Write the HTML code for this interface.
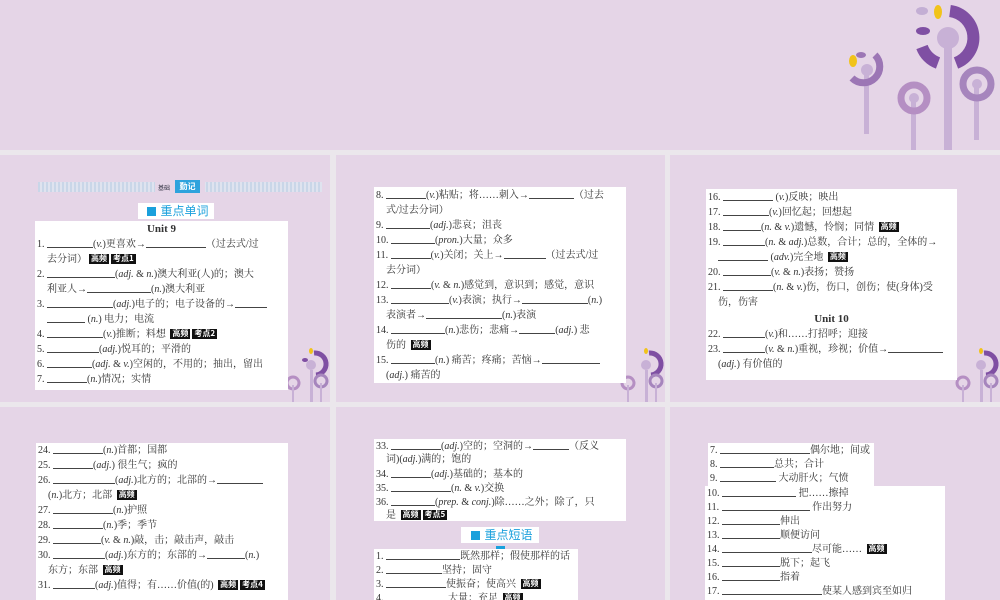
<!DOCTYPE html>
<html><head><meta charset="utf-8">
<style>
*{margin:0;padding:0;box-sizing:border-box}
body{width:1000px;height:600px;overflow:hidden;background:#ebe7ec;position:relative;font-family:"Liberation Serif","Noto Serif CJK SC",serif;color:#333}
.s{position:absolute;background:#e5d5e7}
.b{position:absolute;background:#fff;font-size:10px;line-height:15px;padding:0 2px;white-space:nowrap;overflow:hidden}
.b div{height:15px}
.b5 div{height:14px;line-height:14px}
.i{padding-left:10px}
u{display:inline-block;text-decoration:none;border-bottom:1px solid #444;height:11px;vertical-align:-1px}
em{font-style:italic}
.t{display:inline-block;background:#111;color:#fff;font-size:8px;line-height:10px;padding:0 2px;font-family:"Noto Sans CJK SC",sans-serif;font-weight:bold;vertical-align:1px;margin-left:2px}
.h{position:absolute;background:#fff;color:#1aa0dc;font-family:"Noto Sans CJK SC",sans-serif;font-size:12px;line-height:15px;text-align:center}
.h:before,.h:after{content:"";display:inline-block;width:9px;height:9px;background:#1aa0dc;margin:0 4px;vertical-align:-1px}
.c{text-align:center;font-weight:bold;font-size:11px}
</style></head><body>
<div class="s" style="left:0;top:0;width:1000px;height:150px"></div>
<svg style="position:absolute;left:840px;top:0" width="160" height="150">
<g fill="none">
<rect x="104" y="40" width="8" height="110" fill="#c8b1d6"/>
<circle cx="108" cy="38" r="11" fill="#c8b1d6"/>
<path d="M110 11 A27 27 0 0 1 116 63" stroke="#7f4fa3" stroke-width="12"/>
<path d="M98 63 A27 27 0 0 1 82 47" stroke="#7f4fa3" stroke-width="12"/>
<ellipse cx="83" cy="31" rx="7" ry="4" fill="#7f4fa3"/>
<ellipse cx="82" cy="11" rx="6" ry="4" fill="#c3aed4"/>
<ellipse cx="98" cy="12" rx="4" ry="7" fill="#f1c31a"/>
<rect x="24" y="72" width="5" height="62" fill="#c8b1d6"/>
<circle cx="27" cy="70" r="6" fill="#c8b1d6"/>
<path d="M35 55 A16 16 0 1 1 12 78" stroke="#9c76b5" stroke-width="7"/>
<ellipse cx="13" cy="61" rx="4" ry="6" fill="#f1c31a"/>
<ellipse cx="21" cy="55" rx="5" ry="3" fill="#9c76b5"/>
<rect x="71" y="100" width="5" height="50" fill="#c8b1d6"/>
<circle cx="74" cy="98" r="13" stroke="#b58fc3" stroke-width="7"/>
<circle cx="74" cy="98" r="5" fill="#c8b1d6"/>
<rect x="134" y="86" width="5" height="54" fill="#c8b1d6"/>
<circle cx="137" cy="84" r="14" stroke="#a685bd" stroke-width="7"/>
<circle cx="137" cy="84" r="5" fill="#c8b1d6"/>
</g></svg>

<div class="s" style="left:0;top:155px;width:330px;height:247px"></div>
<div class="s" style="left:336px;top:155px;width:329px;height:247px"></div>
<div class="s" style="left:670px;top:155px;width:330px;height:247px"></div>
<div class="s" style="left:0;top:407px;width:330px;height:193px"></div>
<div class="s" style="left:336px;top:407px;width:329px;height:193px"></div>
<div class="s" style="left:670px;top:407px;width:330px;height:193px"></div>

<svg style="position:absolute;left:283px;top:345px" width="47" height="57"><g fill="none"><rect x="27" y="25" width="3" height="32" fill="#c8b1d6"/><circle cx="28" cy="20" r="5" fill="#c8b1d6"/><path d="M31 8 A11 11 0 0 1 33 30" stroke="#7f4fa3" stroke-width="5"/><ellipse cx="22" cy="15" rx="3" ry="2" fill="#7f4fa3"/><ellipse cx="28" cy="6" rx="2" ry="3" fill="#f1c31a"/><circle cx="10" cy="38" r="6" stroke="#b58fc3" stroke-width="3"/><rect x="9" y="40" width="2" height="17" fill="#c8b1d6"/><circle cx="38" cy="36" r="6" stroke="#a685bd" stroke-width="3"/><rect x="37" y="38" width="2" height="19" fill="#c8b1d6"/></g></svg>
<svg style="position:absolute;left:618px;top:345px" width="47" height="57"><g fill="none"><rect x="27" y="25" width="3" height="32" fill="#c8b1d6"/><circle cx="28" cy="20" r="5" fill="#c8b1d6"/><path d="M31 8 A11 11 0 0 1 33 30" stroke="#7f4fa3" stroke-width="5"/><ellipse cx="28" cy="6" rx="2" ry="3" fill="#f1c31a"/><circle cx="10" cy="38" r="6" stroke="#b58fc3" stroke-width="3"/><rect x="9" y="40" width="2" height="17" fill="#c8b1d6"/><circle cx="38" cy="36" r="6" stroke="#a685bd" stroke-width="3"/><rect x="37" y="38" width="2" height="19" fill="#c8b1d6"/></g></svg>
<svg style="position:absolute;left:953px;top:345px" width="47" height="57"><g fill="none"><rect x="27" y="25" width="3" height="32" fill="#c8b1d6"/><circle cx="28" cy="20" r="5" fill="#c8b1d6"/><path d="M31 8 A11 11 0 0 1 33 30" stroke="#7f4fa3" stroke-width="5"/><ellipse cx="28" cy="6" rx="2" ry="3" fill="#f1c31a"/><circle cx="10" cy="38" r="6" stroke="#b58fc3" stroke-width="3"/><rect x="9" y="40" width="2" height="17" fill="#c8b1d6"/><circle cx="38" cy="36" r="6" stroke="#a685bd" stroke-width="3"/><rect x="37" y="38" width="2" height="19" fill="#c8b1d6"/></g></svg>

<div style="position:absolute;left:38px;top:182px;width:284px;height:10px;background:repeating-linear-gradient(90deg,#c9d6e8 0 2px,#dfe3ef 2px 4px)"></div>
<div style="position:absolute;left:155px;top:180px;width:50px;height:13px;background:#e5d5e7"></div>
<div style="position:absolute;left:158px;top:183px;font-size:6px;color:#334;font-family:'Noto Sans CJK SC',sans-serif">基础</div>
<div style="position:absolute;left:175px;top:180px;width:25px;height:13px;background:#2ea3dd;color:#fff;font-size:8px;line-height:13px;text-align:center;font-family:'Noto Sans CJK SC',sans-serif;font-weight:bold">勤记</div>
<div class="h" style="left:138px;top:203px;width:76px;height:16px">重点单词</div>
<div class="b" style="left:35px;top:221px;width:253px;height:169px;padding-top:1px">
<div class="c">Unit 9</div>
<div>1. <u style="width:46px"></u>(<em>v.</em>)更喜欢→<u style="width:60px"></u>（过去式/过</div>
<div class="i">去分词）<span class="t">高频</span><span class="t">考点1</span></div>
<div>2. <u style="width:68px"></u>(<em>adj.</em> &amp; <em>n.</em>)澳大利亚(人)的；澳大</div>
<div class="i">利亚人→<u style="width:64px"></u>(<em>n.</em>)澳大利亚</div>
<div>3. <u style="width:66px"></u>(<em>adj.</em>)电子的；电子设备的→<u style="width:32px"></u></div>
<div class="i"><u style="width:38px"></u> (<em>n.</em>) 电力；电流</div>
<div>4. <u style="width:56px"></u>(<em>v.</em>)推断；料想 <span class="t">高频</span><span class="t">考点2</span></div>
<div>5. <u style="width:52px"></u>(<em>adj.</em>)悦耳的；平滑的</div>
<div>6. <u style="width:45px"></u>(<em>adj.</em> &amp; <em>v.</em>)空闲的，不用的；抽出，留出</div>
<div>7. <u style="width:40px"></u>(<em>n.</em>)情况；实情</div>
</div>

<div class="b" style="left:374px;top:187px;width:252px;height:196px;padding-top:1px">
<div>8. <u style="width:40px"></u>(<em>v.</em>)粘贴；将……刺入→<u style="width:45px"></u>（过去</div>
<div class="i">式/过去分词）</div>
<div>9. <u style="width:44px"></u>(<em>adj.</em>)悲哀；沮丧</div>
<div>10. <u style="width:44px"></u>(<em>pron.</em>)大量；众多</div>
<div>11. <u style="width:40px"></u>(<em>v.</em>)关闭；关上→<u style="width:42px"></u>（过去式/过</div>
<div class="i">去分词）</div>
<div>12. <u style="width:40px"></u>(<em>v.</em> &amp; <em>n.</em>)感觉到，意识到；感觉，意识</div>
<div>13. <u style="width:58px"></u>(<em>v.</em>)表演；执行→<u style="width:66px"></u>(<em>n.</em>)</div>
<div class="i">表演者→<u style="width:76px"></u>(<em>n.</em>)表演</div>
<div>14. <u style="width:54px"></u>(<em>n.</em>)悲伤；悲痛→<u style="width:36px"></u>(<em>adj.</em>) 悲</div>
<div class="i">伤的 <span class="t">高频</span></div>
<div>15. <u style="width:44px"></u>(<em>n.</em>) 痛苦；疼痛；苦恼→<u style="width:58px"></u></div>
<div class="i">(<em>adj.</em>) 痛苦的</div>
</div>

<div class="b" style="left:706px;top:189px;width:251px;height:191px;padding-top:1px">
<div>16. <u style="width:50px"></u> (<em>v.</em>)反映；映出</div>
<div>17. <u style="width:46px"></u>(<em>v.</em>)回忆起；回想起</div>
<div>18. <u style="width:38px"></u>(<em>n.</em> &amp; <em>v.</em>)遗憾，怜悯；同情 <span class="t">高频</span></div>
<div>19. <u style="width:42px"></u>(<em>n.</em> &amp; <em>adj.</em>)总数，合计；总的，全体的→</div>
<div class="i"><u style="width:50px"></u> (<em>adv.</em>)完全地 <span class="t">高频</span></div>
<div>20. <u style="width:48px"></u>(<em>v.</em> &amp; <em>n.</em>)表扬；赞扬</div>
<div>21. <u style="width:50px"></u>(<em>n.</em> &amp; <em>v.</em>)伤，伤口，创伤；使(身体)受</div>
<div class="i">伤，伤害</div>
<div class="c" style="height:17px;line-height:19px">Unit 10</div>
<div>22. <u style="width:42px"></u>(<em>v.</em>)和……打招呼；迎接</div>
<div>23. <u style="width:42px"></u>(<em>v.</em> &amp; <em>n.</em>)重视，珍视；价值→<u style="width:55px"></u></div>
<div class="i">(<em>adj.</em>) 有价值的</div>
</div>

<div class="b" style="left:36px;top:443px;width:252px;height:157px;padding-top:0">
<div>24. <u style="width:50px"></u>(<em>n.</em>)首都；国都</div>
<div>25. <u style="width:40px"></u>(<em>adj.</em>) 很生气；疯的</div>
<div>26. <u style="width:62px"></u>(<em>adj.</em>)北方的；北部的→<u style="width:46px"></u></div>
<div class="i">(<em>n.</em>)北方；北部 <span class="t">高频</span></div>
<div>27. <u style="width:60px"></u>(<em>n.</em>)护照</div>
<div>28. <u style="width:50px"></u>(<em>n.</em>)季；季节</div>
<div>29. <u style="width:48px"></u>(<em>v.</em> &amp; <em>n.</em>)敲，击；敲击声，敲击</div>
<div>30. <u style="width:52px"></u>(<em>adj.</em>)东方的；东部的→<u style="width:38px"></u>(<em>n.</em>)</div>
<div class="i">东方；东部 <span class="t">高频</span></div>
<div>31. <u style="width:42px"></u>(<em>adj.</em>)值得；有……价值(的) <span class="t">高频</span><span class="t">考点4</span></div>
</div>

<div class="b b5" style="left:374px;top:439px;width:252px;height:82px;padding-top:0">
<div>33. <u style="width:50px"></u>(<em>adj.</em>)空的；空洞的→<u style="width:36px"></u>（反义</div>
<div class="i">词)(<em>adj.</em>)满的；饱的</div>
<div>34. <u style="width:40px"></u>(<em>adj.</em>)基础的；基本的</div>
<div>35. <u style="width:60px"></u>(<em>n.</em> &amp; <em>v.</em>)交换</div>
<div>36. <u style="width:44px"></u>(<em>prep.</em> &amp; <em>conj.</em>)除……之外；除了，只</div>
<div class="i">是 <span class="t">高频</span><span class="t">考点5</span></div>
</div>
<div class="h" style="left:461px;top:527px;width:78px;height:16px">重点短语</div>
<div class="b b5" style="left:374px;top:549px;width:204px;height:51px;padding-top:0">
<div>1. <u style="width:74px"></u>既然那样；假使那样的话</div>
<div>2. <u style="width:56px"></u>坚持；固守</div>
<div>3. <u style="width:60px"></u>使振奋；使高兴 <span class="t">高频</span></div>
<div>4. <u style="width:62px"></u>大量；充足 <span class="t">高频</span></div>
</div>

<div class="b b5" style="left:708px;top:443px;width:166px;height:44px;padding-top:0">
<div>7. <u style="width:90px"></u>偶尔地；间或</div>
<div>8. <u style="width:54px"></u>总共；合计</div>
<div>9. <u style="width:56px"></u> 大动肝火；气愤</div>
</div>
<div class="b b5" style="left:705px;top:486px;width:240px;height:114px;padding-top:0">
<div>10. <u style="width:74px"></u> 把……擦掉</div>
<div>11. <u style="width:88px"></u> 作出努力</div>
<div>12. <u style="width:58px"></u>伸出</div>
<div>13. <u style="width:58px"></u>顺便访问</div>
<div>14. <u style="width:90px"></u>尽可能…… <span class="t">高频</span></div>
<div>15. <u style="width:58px"></u>脱下；起飞</div>
<div>16. <u style="width:58px"></u>指着</div>
<div>17. <u style="width:100px"></u>使某人感到宾至如归</div>
</div>
</body></html>
